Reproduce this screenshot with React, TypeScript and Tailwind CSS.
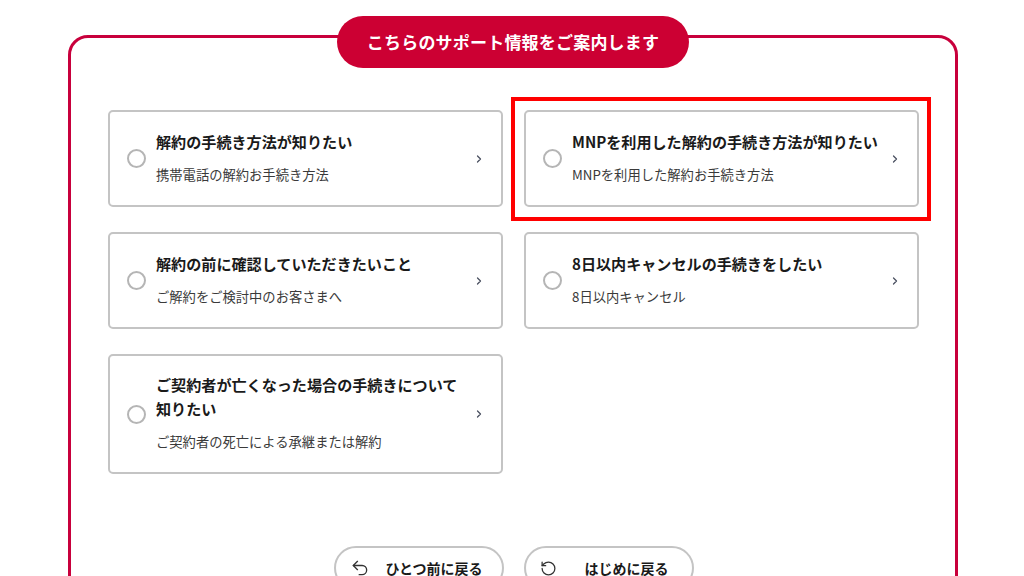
import React from "react";
import { ChevronRight, Undo2, RotateCcw } from "lucide-react";

type Item = {
  title: React.ReactNode;
  sub: string;
  highlight?: boolean;
  tall?: boolean;
};

const items: Item[] = [
  { title: "解約の手続き方法が知りたい", sub: "携帯電話の解約お手続き方法" },
  {
    title: "MNPを利用した解約の手続き方法が知りたい",
    sub: "MNPを利用した解約お手続き方法",
    highlight: true,
  },
  { title: "解約の前に確認していただきたいこと", sub: "ご解約をご検討中のお客さまへ" },
  { title: "8日以内キャンセルの手続きをしたい", sub: "8日以内キャンセル" },
  {
    title: (
      <>
        ご契約者が亡くなった場合の手続きについて
        <br />
        知りたい
      </>
    ),
    sub: "ご契約者の死亡による承継または解約",
    tall: true,
  },
];

const Card = ({ item }: { item: Item }) => (
  <div className="relative">
    {item.highlight && (
      <div className="absolute -top-[13px] -bottom-[14px] -left-[13px] -right-[12px] border-4 border-[#ff0000] pointer-events-none" />
    )}
    <button
      className={
        "w-full h-full flex items-center border-2 border-[#c4c4c4] rounded-[5px] bg-white pl-[17px] pr-[16px] text-left " +
        (item.tall ? "min-h-[120px]" : "min-h-[97px]")
      }
    >
      <span className="w-[19px] h-[19px] rounded-full border-2 border-[#b5b5b5] shrink-0" />
      <span className="flex-1 ml-[10px] flex flex-col pt-[15px] pb-[19px]">
        <span className="text-[15.1px] leading-[24px] font-bold text-[#1a1a1a] whitespace-nowrap">
          {item.title}
        </span>
        <span className="mt-[12px] text-[13.3px] leading-[20px] text-[#3a3a3a]">{item.sub}</span>
      </span>
      <ChevronRight size={12} strokeWidth={2.5} className="text-[#4a5060] shrink-0" />
    </button>
  </div>
);

export default function App() {
  return (
    <div
      className="w-[1024px] h-[576px] overflow-hidden bg-white"
      style={{ fontFamily: '"Noto Sans CJK JP", "Noto Sans", sans-serif' }}
    >
      <div className="pt-[35px] pl-[68px] pr-[66px]">
        <div className="relative border-[3px] border-[#c8003c] rounded-[20px] pt-[72px] pl-[37px] pr-[36px] pb-[40px]">
          <div className="absolute -top-[22px] left-1/2 -translate-x-1/2 w-[352px] h-[52px] rounded-full bg-[#cc0033] flex items-center justify-center">
            <span className="text-white font-bold text-[17px] tracking-[0.2px]">
              こちらのサポート情報をご案内します
            </span>
          </div>
          <div className="grid grid-cols-2 gap-x-[21px] gap-y-[25px]">
            {items.map((it, i) => (
              <Card key={i} item={it} />
            ))}
          </div>
          <div className="mt-[72px] flex justify-center gap-[20px]">
            <button className="w-[170px] h-[44px] rounded-full border-2 border-[#c4c4c4] flex items-center pl-[14px] text-[14px] font-bold text-[#1a1a1a]">
              <Undo2 size={20} strokeWidth={1.6} className="text-[#333]" />
              <span className="ml-[16px]">ひとつ前に戻る</span>
            </button>
            <button className="w-[170px] h-[44px] rounded-full border-2 border-[#c4c4c4] flex items-center pl-[14px] text-[14px] font-bold text-[#1a1a1a]">
              <RotateCcw size={17} strokeWidth={1.8} className="text-[#333]" />
              <span className="ml-[28px]">はじめに戻る</span>
            </button>
          </div>
        </div>
      </div>
    </div>
  );
}
